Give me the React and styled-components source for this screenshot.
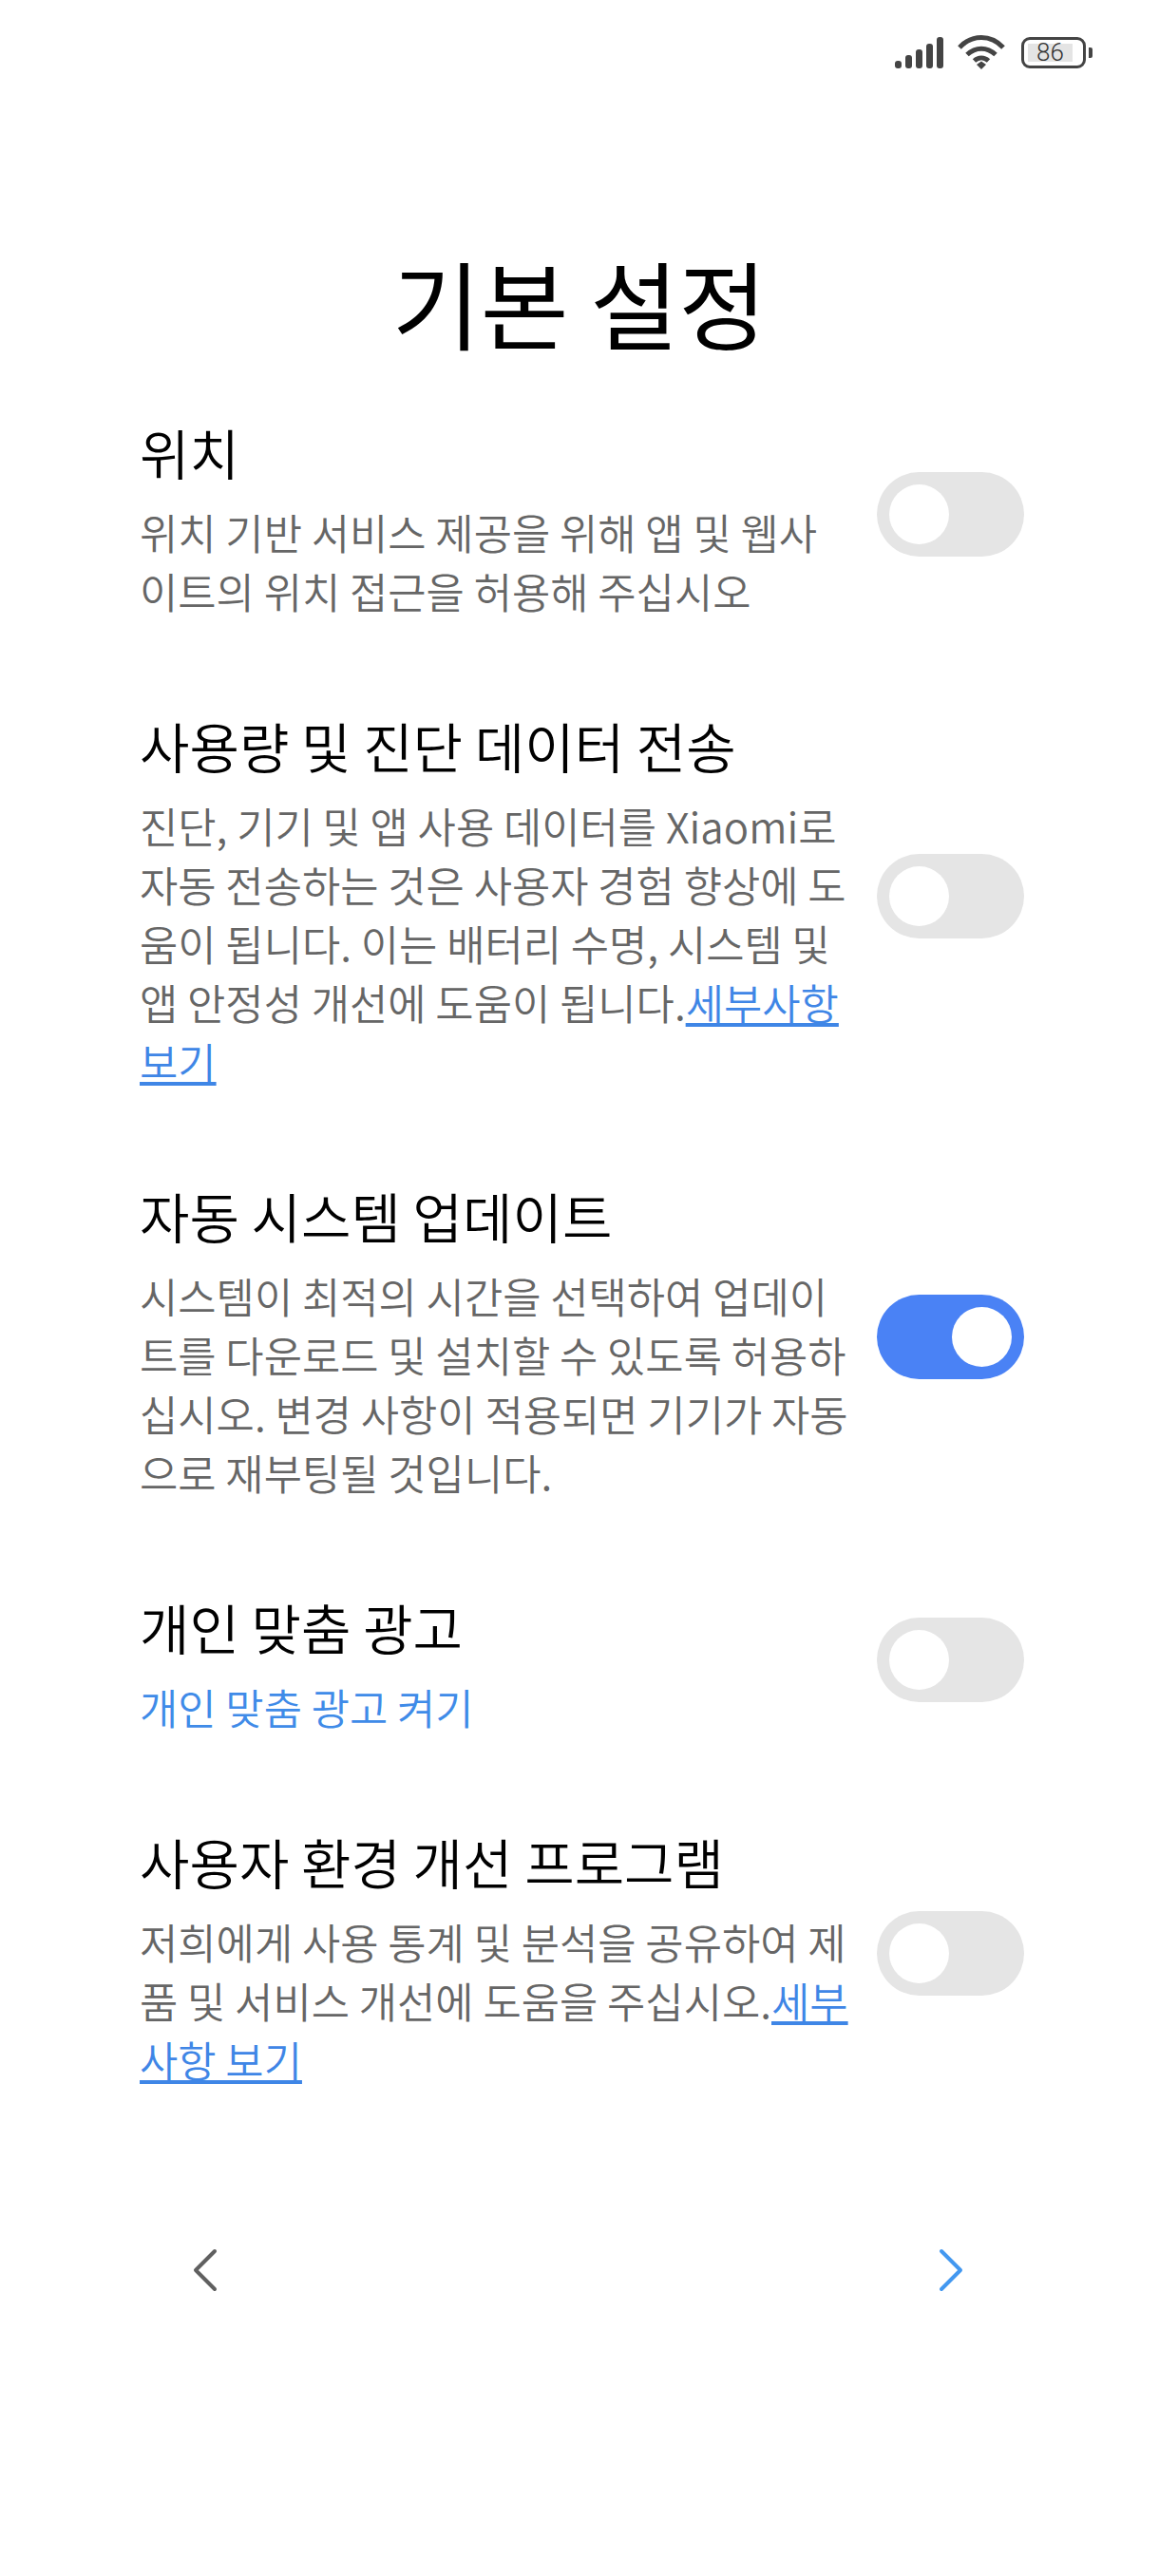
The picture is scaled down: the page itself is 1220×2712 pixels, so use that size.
import styled, { createGlobalStyle } from 'styled-components'

const GlobalStyle = createGlobalStyle`
  html, body { margin: 0; padding: 0; background: #fff; }
  body { font-family: "Noto Sans CJK KR", "Noto Sans", sans-serif; font-weight: 350; }
`

const Page = styled.div`
  width: 1220px;
  height: 2712px;
  background: #fff;
  color: #000;
  overflow: hidden;
`

const StatusBar = styled.div`
  height: 38px;
  padding: 36px 70px 0 0;
  display: flex;
  justify-content: flex-end;
  align-items: center;
  gap: 14px;
`

const Battery = styled.div`
  display: flex;
  align-items: center;
  gap: 3px;
  margin-left: 3px;
`

const BatteryShell = styled.div`
  width: 68px;
  height: 33px;
  box-sizing: border-box;
  border: 3px solid #444;
  border-radius: 9px;
  padding: 4px 0 4px 4px;
`

const BatteryLevel = styled.div`
  width: 47px;
  height: 19px;
  background: #e4e4e4;
  color: #333;
  font-family: "Roboto", sans-serif;
  font-size: 26px;
  line-height: 19px;
  text-align: center;
`

const BatteryTip = styled.div`
  width: 4px;
  height: 11px;
  border-radius: 0 2px 2px 0;
  background: #444;
`

const Heading = styled.h1`
  margin: 173px 0 0;
  text-align: center;
  font-size: 101px;
  font-weight: 400;
  line-height: 140px;
`

const List = styled.div`
  margin-top: 50px;
  padding: 0 142px 0 147px;
  display: flex;
  flex-direction: column;
  gap: 93px;
`

const Row = styled.div`
  display: flex;
  align-items: center;
  justify-content: space-between;
  gap: 10px;
`

const RowText = styled.div`
  flex: 1;
  min-width: 0;
`

const RowTitle = styled.div`
  font-size: 57px;
  line-height: 76px;
  white-space: nowrap;
`

const RowBody = styled.div`
  margin-top: 16px;
  font-size: 43.8px;
  line-height: 62px;
  color: #666;
  white-space: nowrap;
`

const DocLink = styled.span`
  color: #3f86e6;
  text-decoration: underline;
`

const Action = styled.span`
  color: #3f8be8;
`

const Toggle = styled.div`
  flex: none;
  width: 155px;
  height: 89px;
  margin-bottom: 7px;
  border-radius: 45px;
  background: ${(p) => (p.$on ? '#4a82f5' : '#e5e5e5')};
  display: flex;
  align-items: center;
  justify-content: ${(p) => (p.$on ? 'flex-end' : 'flex-start')};
  padding: 0 13px;
  box-sizing: border-box;
`

const Knob = styled.div`
  width: 63px;
  height: 63px;
  border-radius: 50%;
  background: #fff;
`

const Nav = styled.div`
  margin-top: 168px;
  padding: 0 205px 0 202px;
  display: flex;
  justify-content: space-between;
`

const settings = [
  {
    title: '위치',
    on: false,
    body: <>위치 기반 서비스 제공을 위해 앱 및 웹사<br />이트의 위치 접근을 허용해 주십시오</>,
  },
  {
    title: '사용량 및 진단 데이터 전송',
    on: false,
    body: <>진단, 기기 및 앱 사용 데이터를 Xiaomi로<br />자동 전송하는 것은 사용자 경험 향상에 도<br />움이 됩니다. 이는 배터리 수명, 시스템 및<br />앱 안정성 개선에 도움이 됩니다.<DocLink>세부사항<br />보기</DocLink></>,
  },
  {
    title: '자동 시스템 업데이트',
    on: true,
    body: <>시스템이 최적의 시간을 선택하여 업데이<br />트를 다운로드 및 설치할 수 있도록 허용하<br />십시오. 변경 사항이 적용되면 기기가 자동<br />으로 재부팅될 것입니다.</>,
  },
  {
    title: '개인 맞춤 광고',
    on: false,
    body: <Action>개인 맞춤 광고 켜기</Action>,
  },
  {
    title: '사용자 환경 개선 프로그램',
    on: false,
    body: <>저희에게 사용 통계 및 분석을 공유하여 제<br />품 및 서비스 개선에 도움을 주십시오.<DocLink>세부<br />사항 보기</DocLink></>,
  },
]

function App() {
  return (
    <Page>
      <GlobalStyle />
      <StatusBar>
        <svg width="52" height="34" viewBox="0 0 52 34" fill="#444">
          <rect x="0" y="26" width="7" height="8" rx="3" />
          <rect x="11" y="20" width="7" height="14" rx="3" />
          <rect x="22" y="14" width="7" height="20" rx="3" />
          <rect x="33" y="8" width="7" height="26" rx="3" />
          <rect x="44" y="1" width="7" height="33" rx="3" />
        </svg>
        <svg width="50" height="36" viewBox="0 0 50 36" fill="none" stroke="#444" strokeWidth="5">
          <path d="M2 13C15 -1 35 -1 48 13" />
          <path d="M10 20.5C19 12 31 12 40 20.5" />
          <path d="M17.5 27C22 23 28 23 32.5 27" />
          <path d="M20 31L25 27.5L30 31L25 36Z" fill="#444" stroke="none" />
        </svg>
        <Battery>
          <BatteryShell>
            <BatteryLevel>86</BatteryLevel>
          </BatteryShell>
          <BatteryTip />
        </Battery>
      </StatusBar>
      <Heading>기본 설정</Heading>
      <List>
        {settings.map((s) => (
          <Row key={s.title}>
            <RowText>
              <RowTitle>{s.title}</RowTitle>
              <RowBody>{s.body}</RowBody>
            </RowText>
            <Toggle $on={s.on}>
              <Knob />
            </Toggle>
          </Row>
        ))}
      </List>
      <Nav>
        <svg width="28" height="46" viewBox="0 0 28 46" fill="none" stroke="#606060" strokeWidth="4" strokeLinecap="round" strokeLinejoin="round">
          <path d="M24 3L4 23L24 43" />
        </svg>
        <svg width="28" height="46" viewBox="0 0 28 46" fill="none" stroke="#4398f0" strokeWidth="4" strokeLinecap="round" strokeLinejoin="round">
          <path d="M4 3L24 23L4 43" />
        </svg>
      </Nav>
    </Page>
  )
}

export default App
